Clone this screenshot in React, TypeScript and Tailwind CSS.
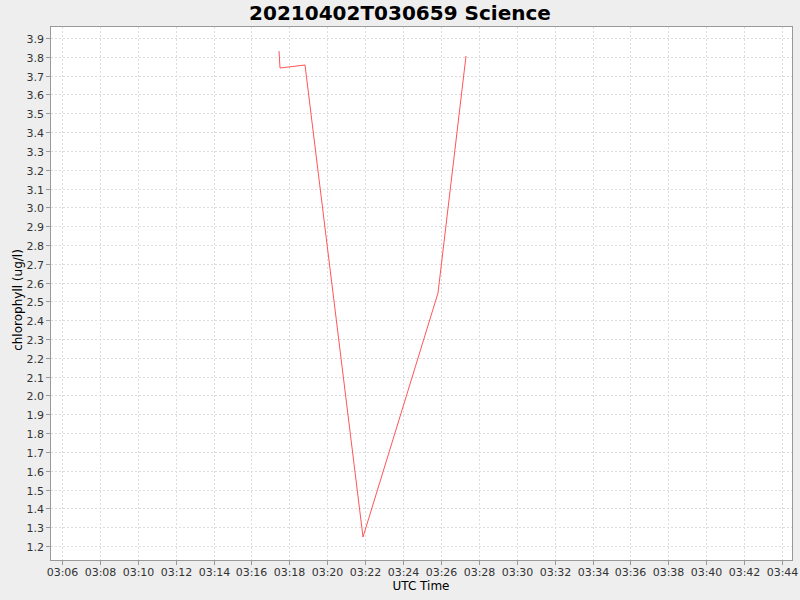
import React from "react";

const yTicks = Array.from({ length: 28 }, (_, i) => 1.2 + i * 0.1);
const xTicks = Array.from({ length: 20 }, (_, i) => 6 + i * 2);

const yPos = (v: number) => 546 - 26 - ((v - 1.2) / 0.1) * 18.815;
const xPos = (i: number) => 62 + i * 37.895;

const pts: [number, number][] = [
  [279, 51],
  [280, 68],
  [305, 65],
  [363, 537],
  [438, 293],
  [466, 56],
];

export default function App() {
  return (
    <div
      className="w-[800px] h-[600px] bg-[#eeeeee] flex flex-col"
      style={{ fontFamily: '"DejaVu Sans", sans-serif' }}
    >
      <div className="h-[26px] flex items-center justify-center text-[20px] font-bold text-black">
        20210402T030659 Science
      </div>
      <svg width={800} height={574} className="block">
        <rect x={50.5} y={0.5} width={742} height={534} fill="#ffffff" stroke="#999999" />
        {yTicks.map((v, i) => {
          const y = Math.round(yPos(v)) + 0.5;
          return (
            <g key={"y" + i}>
              <line x1={51} x2={792} y1={y} y2={y} stroke="#dddddd" strokeDasharray="2 2" />
              <line x1={46} x2={50} y1={y} y2={y} stroke="#999999" />
              <text x={44} y={y + 4} textAnchor="end" fontSize={11} fill="#333333">
                {v.toFixed(1)}
              </text>
            </g>
          );
        })}
        {xTicks.map((m, i) => {
          const x = Math.round(xPos(i)) + 0.5;
          return (
            <g key={"x" + i}>
              <line x1={x} x2={x} y1={1} y2={534} stroke="#dddddd" strokeDasharray="2 2" />
              <line x1={x} x2={x} y1={535} y2={539} stroke="#999999" />
              <text x={x} y={550} textAnchor="middle" fontSize={11} fill="#333333">
                03:{String(m).padStart(2, "0")}
              </text>
            </g>
          );
        })}
        <polyline
          points={pts.map(([x, y]) => `${x},${y - 26}`).join(" ")}
          fill="none"
          stroke="#ff5555"
          strokeWidth={1}
        />
        <text
          x={0}
          y={0}
          fontSize={12}
          fill="#000000"
          textAnchor="middle"
          transform="translate(22 274) rotate(-90)"
        >
          chlorophyll (ug/l)
        </text>
        <text x={421} y={564} fontSize={12} textAnchor="middle" fill="#000000">
          UTC Time
        </text>
      </svg>
    </div>
  );
}
